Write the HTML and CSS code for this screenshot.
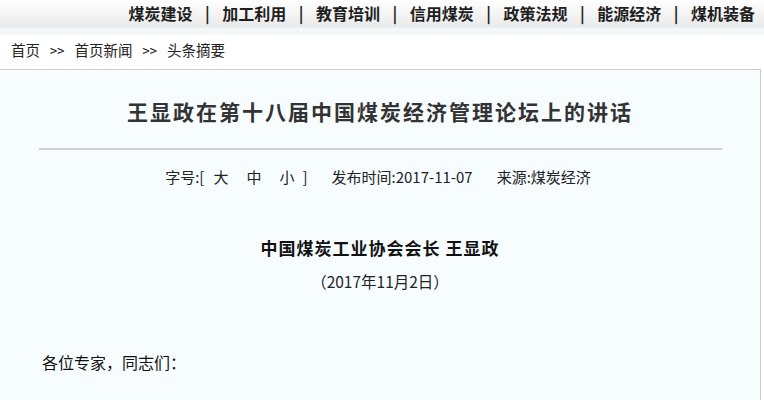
FILE: index.html
```html
<!DOCTYPE html>
<html lang="zh-CN">
<head>
<meta charset="utf-8">
<link rel="stylesheet" href="styles.css">
</head>
<body>
<div class="topnav">
  <span class="item">煤炭建设</span><span class="sep">|</span>
  <span class="item">加工利用</span><span class="sep">|</span>
  <span class="item">教育培训</span><span class="sep">|</span>
  <span class="item">信用煤炭</span><span class="sep">|</span>
  <span class="item">政策法规</span><span class="sep">|</span>
  <span class="item">能源经济</span><span class="sep">|</span>
  <span class="item">煤机装备</span>
</div>
<div class="stripe"></div>
<div class="crumb">首页<span class="arrow">&gt;&gt;</span>首页新闻<span class="arrow">&gt;&gt;</span>头条摘要</div>
<div class="content">
  <h1 class="title">王显政在第十八届中国煤炭经济管理论坛上的讲话</h1>
  <div class="divider"></div>
  <div class="meta">
    <span>字号:[</span>
    <span class="size first">大</span>
    <span class="size">中</span>
    <span class="size">小</span>
    <span class="close">]</span>
    <span class="pub">发布时间:2017-11-07</span>
    <span class="src">来源:煤炭经济</span>
  </div>
  <div class="author">中国煤炭工业协会会长 王显政</div>
  <div class="date">（2017年11月2日）</div>
  <div class="greet">各位专家，同志们：</div>
</div>
</body>
</html>
```
FILE: styles.css
```css
html, body {
  margin: 0;
  padding: 0;
  background: #ffffff;
  font-family: "Noto Sans CJK SC", "Noto Sans", sans-serif;
  color: #333333;
}
.topnav {
  height: 27px;
  display: flex;
  justify-content: flex-end;
  align-items: center;
  gap: 12.5px;
  padding-right: 9px;
  background: linear-gradient(#ffffff, #e9e9e9);
  border-bottom: 1px solid #e2f3f7;
  font-size: 16px;
  font-weight: bold;
  color: #1e1e1e;
  line-height: 27px;
}
.stripe {
  height: 7px;
  background: #f3f7f8;
}
.crumb {
  padding: 3px 0 7px 11px;
  line-height: 24px;
  font-size: 14.5px;
  color: #222222;
  font-feature-settings: "hwid";
}
.crumb .arrow {
  margin: 0 10px;
}
.content {
  width: 760px;
  border-top: 1px solid #cccccc;
  border-right: 1px solid #cccccc;
  background: #f7fcff;
  padding-top: 26px;
  padding-bottom: 40px;
}
.title {
  margin: 0;
  text-align: center;
  font-size: 21px;
  line-height: 30px;
  letter-spacing: 2px;
  font-weight: bold;
  color: #333333;
}
.divider {
  margin: 22px 0 0 39px;
  width: 683px;
  height: 2px;
  background: #d2d2d2;
}
.meta {
  margin-top: 17px;
  display: flex;
  justify-content: center;
  font-size: 15px;
  line-height: 20px;
  color: #222222;
  padding-right: 4px;
}
.meta .size {
  margin-left: 18px;
}
.meta .size.first {
  margin-left: 9px;
}
.meta .close {
  margin-left: 8px;
}
.meta .pub {
  margin-left: 24px;
}
.meta .src {
  margin-left: 24px;
}
.author {
  margin-top: 51px;
  text-align: center;
  font-size: 17px;
  letter-spacing: 1px;
  font-weight: bold;
  line-height: 20px;
  color: #111111;
}
.date {
  margin-top: 13px;
  text-align: center;
  font-size: 15.5px;
  line-height: 20px;
  color: #222222;
}
.greet {
  margin-top: 61px;
  padding-left: 42px;
  font-size: 16px;
  line-height: 20px;
  color: #111111;
}
```
